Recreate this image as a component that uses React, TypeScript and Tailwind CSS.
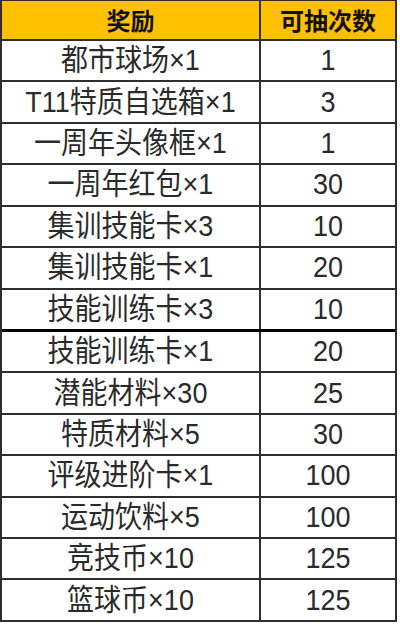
import React from "react";

const rows: [string, string][] = [
  ["都市球场×1", "1"],
  ["T11特质自选箱×1", "3"],
  ["一周年头像框×1", "1"],
  ["一周年红包×1", "30"],
  ["集训技能卡×3", "10"],
  ["集训技能卡×1", "20"],
  ["技能训练卡×3", "10"],
  ["技能训练卡×1", "20"],
  ["潜能材料×30", "25"],
  ["特质材料×5", "30"],
  ["评级进阶卡×1", "100"],
  ["运动饮料×5", "100"],
  ["竞技币×10", "125"],
  ["篮球币×10", "125"],
];

export default function App() {
  return (
    <div
      className="w-[400px] h-[624px] bg-white"
      style={{ fontFamily: '"Liberation Sans", "Noto Sans CJK SC", sans-serif' }}
    >
      <div className="w-[397px] h-[622px] flex flex-col border-l-2 border-r-2 border-t border-b-2 border-[#2e2e2e]">
        <div
          className="h-[40px] flex bg-[#ffc000] border-b-2 border-[#2e2e2e] text-[24px] font-bold text-[#111] leading-none"
          style={{ fontFamily: '"Noto Sans CJK SC", sans-serif' }}
        >
          <div className="w-[259px] flex items-center justify-center border-r-2 border-[#2e2e2e]">奖励</div>
          <div className="flex-1 flex items-center justify-center">可抽次数</div>
        </div>
        {rows.map(([a, b], i) => (
          <div
            key={i}
            className={
              "flex-1 flex text-[27px] text-[#2a2a2a] leading-none " +
              (i === rows.length - 1
                ? ""
                : i === 6
                ? "border-b-[3px] border-black"
                : "border-b-2 border-[#2e2e2e]")
            }
          >
            <div className="w-[259px] flex items-center justify-center border-r-2 border-[#2e2e2e]">
              <span className="inline-block scale-y-110">{a}</span>
            </div>
            <div className="flex-1 flex items-center justify-center">
              <span className="inline-block scale-y-110">{b}</span>
            </div>
          </div>
        ))}
      </div>
    </div>
  );
}
